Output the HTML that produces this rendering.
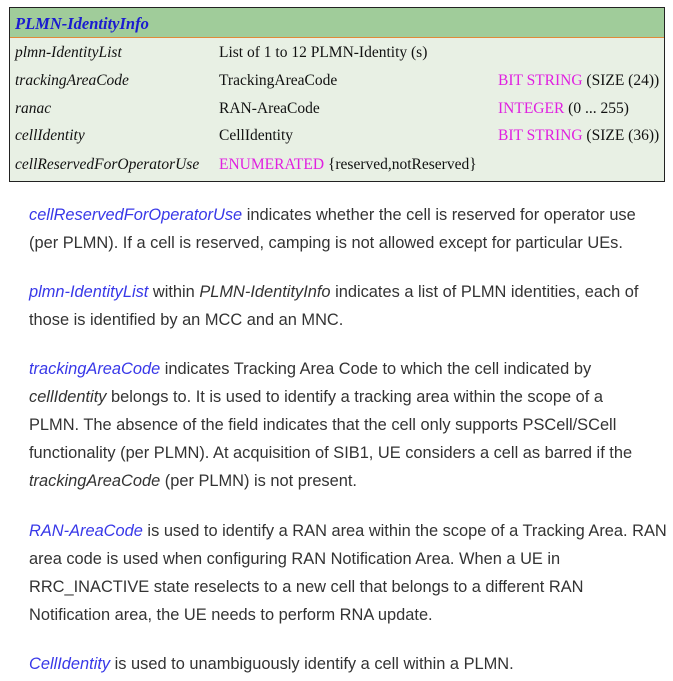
<!DOCTYPE html>
<html><head><meta charset="utf-8"><style>
body{margin:0;background:#fff;width:673px;height:681px;overflow:hidden;font-family:"Liberation Sans",sans-serif;}
.tbl{position:absolute;left:9px;top:7px;width:654px;height:173px;border:1px solid #222;background:#e8f0e4;font-family:"Liberation Serif",serif;font-size:15.5px;color:#111;}
.hd{height:29px;background:#a0cc9a;border-bottom:1px solid #e08a3a;}
.hd span{position:absolute;left:5px;top:6px;font-weight:bold;font-style:italic;color:#1a1ad0;font-size:16.5px;}
.c{position:absolute;white-space:nowrap;}
.i{font-style:italic}
.m{color:#e020e0}
p{position:absolute;left:29px;margin:0;width:640px;font-size:16.4px;line-height:28px;color:#333;}
a{color:#3838e8;font-style:italic;text-decoration:none}
em{font-style:italic}
</style></head><body>
<div class="tbl">
<div class="hd"><span>PLMN-IdentityInfo</span></div>
<div class="c i" style="left:5px;top:36px">plmn-IdentityList</div>
<div class="c" style="left:209px;top:36px">List of 1 to 12 PLMN-Identity (s)</div>
<div class="c i" style="left:5px;top:64px">trackingAreaCode</div>
<div class="c" style="left:209px;top:64px">TrackingAreaCode</div>
<div class="c" style="left:488px;top:64px"><span class="m">BIT STRING</span> (SIZE (24))</div>
<div class="c i" style="left:5px;top:92px">ranac</div>
<div class="c" style="left:209px;top:92px">RAN-AreaCode</div>
<div class="c" style="left:488px;top:92px"><span class="m">INTEGER</span> (0 ... 255)</div>
<div class="c i" style="left:5px;top:119px">cellIdentity</div>
<div class="c" style="left:209px;top:119px">CellIdentity</div>
<div class="c" style="left:488px;top:119px"><span class="m">BIT STRING</span> (SIZE (36))</div>
<div class="c i" style="left:5px;top:148px">cellReservedForOperatorUse</div>
<div class="c" style="left:209px;top:148px"><span class="m">ENUMERATED</span> {reserved,notReserved}</div>
</div>
<p style="top:201px"><a>cellReservedForOperatorUse</a> indicates whether the cell is reserved for operator use<br>(per PLMN). If a cell is reserved, camping is not allowed except for particular UEs.</p>
<p style="top:278px"><a>plmn-IdentityList</a> within <em>PLMN-IdentityInfo</em> indicates a list of PLMN identities, each of<br>those is identified by an MCC and an MNC.</p>
<p style="top:355px"><a>trackingAreaCode</a> indicates Tracking Area Code to which the cell indicated by<br><em>cellIdentity</em> belongs to. It is used to identify a tracking area within the scope of a<br>PLMN. The absence of the field indicates that the cell only supports PSCell/SCell<br>functionality (per PLMN). At acquisition of SIB1, UE considers a cell as barred if the<br><em>trackingAreaCode</em> (per PLMN) is not present.</p>
<p style="top:517px"><a>RAN-AreaCode</a> is used to identify a RAN area within the scope of a Tracking Area. RAN<br>area code is used when configuring RAN Notification Area. When a UE in<br>RRC_INACTIVE state reselects to a new cell that belongs to a different RAN<br>Notification area, the UE needs to perform RNA update.</p>
<p style="top:650px"><a>CellIdentity</a> is used to unambiguously identify a cell within a PLMN.</p>
</body></html>
